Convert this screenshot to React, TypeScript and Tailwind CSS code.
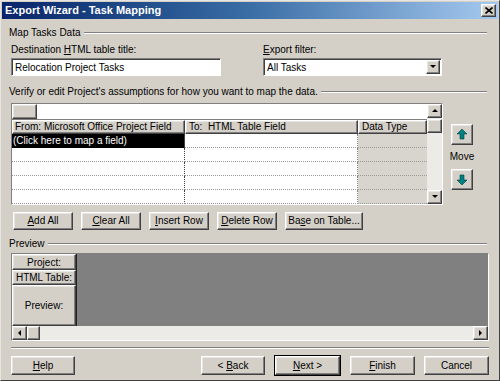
import React from 'react';

const raised =
  'border border-t-white border-l-white border-r-[#404040] border-b-[#404040] shadow-[inset_-1px_-1px_#808080,inset_1px_1px_#e8e6e2]';
const sunken =
  'border border-t-[#808080] border-l-[#808080] border-r-white border-b-white shadow-[inset_1px_1px_#404040]';

const U = ({ children }: { children: React.ReactNode }) => <span className="underline underline-offset-1">{children}</span>;

const GroupLabel = ({ children }: { children: React.ReactNode }) => (
  <div className="flex items-center gap-[3px] pl-[8px] pr-[12px] h-[14px]">
    <span className="leading-none whitespace-nowrap">{children}</span>
    <div className="flex-1 border-t border-t-[#808080] border-b border-b-white" />
  </div>
);

const Btn = ({ children, className = '', focus = false }: { children: React.ReactNode; className?: string; focus?: boolean }) => (
  <div className={`${focus ? 'outline outline-1 outline-black' : ''} ${className}`}>
    <div className={`${raised} bg-[#d4d0c8] h-full flex items-center justify-center leading-none whitespace-nowrap`}>
      <span className="whitespace-pre">{children}</span>
    </div>
  </div>
);

const Arrow = ({ dir, color = '#000' }: { dir: 'up' | 'down' | 'left' | 'right'; color?: string }) => {
  const pts = { up: '1,5 4,2 7,5', down: '1,2 4,5 7,2', left: '5,1 2,4 5,7', right: '2,1 5,4 2,7' }[dir];
  return (
    <svg width="8" height="8" viewBox="0 0 8 8">
      <polygon points={pts} fill={color} />
    </svg>
  );
};

const MoveArrow = ({ up }: { up: boolean }) => (
  <svg width="10" height="11" viewBox="0 0 10 11" style={{ transform: up ? undefined : 'rotate(180deg)' }}>
    <polygon points="5,0 10,5 7,5 7,10 3,10 3,5 0,5" fill="#008080" stroke="#004040" strokeWidth="0.6" />
  </svg>
);

const ScrollBtn = ({ dir, className = '' }: { dir: 'up' | 'down' | 'left' | 'right'; className?: string }) => (
  <div className={`${raised} bg-[#d4d0c8] flex items-center justify-center ${className}`}>
    <Arrow dir={dir} />
  </div>
);

const dotted = 'border-b border-dotted border-b-[#9a9a9a]';

export default function App() {
  const rows = [0, 1, 2, 3, 4];
  return (
    <div
      className="w-[500px] h-[381px] bg-[#d4d0c8] text-black text-[10px] overflow-hidden border border-t-[#e8e6e2] border-l-[#e8e6e2] border-r-[#404040] border-b-[#404040]"
      style={{ fontFamily: '"Liberation Sans", Arial, sans-serif' }}
    >
      {/* title bar */}
      <div className="mx-[1px] mt-[1px] h-[17px] flex items-center justify-between pl-[3px] pr-[2px] bg-gradient-to-r from-[#0a246a] via-[#3a6ea5] to-[#a6caf0]">
        <span className="text-white font-bold text-[11px] leading-none">Export Wizard - Task Mapping</span>
        <div className={`${raised} bg-[#d4d0c8] w-[15px] h-[13px] flex items-center justify-center`}>
          <svg width="8" height="7" viewBox="0 0 8 7">
            <path d="M0.5 0.5 L7.5 6.5 M7.5 0.5 L0.5 6.5" stroke="#000" strokeWidth="1.6" />
          </svg>
        </div>
      </div>

      <div className="mt-[7px]">
        <GroupLabel>Map Tasks Data</GroupLabel>
      </div>

      <div className="flex pl-[10px] mt-[3px]">
        <div className="w-[210px]">
          <div className="h-[14px] leading-[14px]">
            Destination <U>H</U>TML table title:
          </div>
          <div className={`${sunken} bg-white h-[18px] mt-[1px] flex items-center pl-[3px]`}>Relocation Project Tasks</div>
        </div>
        <div className="w-[179px] ml-[42px]">
          <div className="h-[14px] leading-[14px]">
            <U>E</U>xport filter:
          </div>
          <div className={`${sunken} bg-white h-[18px] mt-[1px] flex items-center pl-[3px] pr-[1px]`}>
            <span className="flex-1">All Tasks</span>
            <ScrollBtn dir="down" className="w-[14px] h-[14px]" />
          </div>
        </div>
      </div>

      <div className="mt-[9px]">
        <GroupLabel>Verify or edit Project's assumptions for how you want to map the data.</GroupLabel>
      </div>

      <div className="flex pl-[10px] mt-[4px]">
        {/* mapping grid */}
        <div className={`${sunken} bg-white w-[432px] h-[102px] flex`}>
          <div className="flex-1 flex flex-col">
            <div className="h-[16px] flex border-b border-b-[#808080]">
              <div className={`${raised} bg-[#d4d0c8] w-[25px] h-full`} />
              <div className="flex-1 bg-white" />
            </div>
            <div className="h-[14px] flex">
              <div className={`${raised} bg-[#d4d0c8] w-[173px] pl-[2px] leading-[12px] whitespace-nowrap`}>From: Microsoft Office Project Field</div>
              <div className={`${raised} bg-[#d4d0c8] w-[173px] pl-[3px] leading-[12px] whitespace-nowrap`}>To:&nbsp; HTML Table Field</div>
              <div className={`${raised} bg-[#d4d0c8] flex-1 pl-[3px] leading-[12px] whitespace-nowrap`}>Data Type</div>
            </div>
            {rows.map((r) => (
              <div key={r} className="h-[14px] flex">
                <div
                  className={`w-[173px] border-r border-r-[#404040] pl-[1px] leading-[13px] whitespace-nowrap ${
                    r === 0 ? 'bg-black text-white' : `bg-white ${dotted}`
                  }`}
                >
                  {r === 0 ? '(Click here to map a field)' : ''}
                </div>
                <div className={`w-[173px] bg-white border-r border-dotted border-r-[#808080] ${dotted}`} />
                <div className={`flex-1 bg-[#d8d5ce] ${dotted}`} />
              </div>
            ))}
          </div>
          <div className="w-[15px] flex flex-col bg-[#ecebe8]">
            <ScrollBtn dir="up" className="h-[14px]" />
            <div className={`${raised} bg-[#d4d0c8] h-[14px] mt-[1px]`} />
            <div className="flex-1" />
            <ScrollBtn dir="down" className="h-[14px]" />
          </div>
        </div>

        {/* move */}
        <div className="flex flex-col items-center ml-[8px] w-[22px] pt-[21px]">
          <Btn className="w-[22px] h-[21px]">
            <MoveArrow up />
          </Btn>
          <div className="h-[24px] leading-[24px]">Move</div>
          <Btn className="w-[22px] h-[21px]">
            <MoveArrow up={false} />
          </Btn>
        </div>
      </div>

      <div className="flex pl-[12px] mt-[7px] gap-[8px] h-[18px]">
        <Btn className="w-[60px]"><U>A</U>dd All</Btn>
        <Btn className="w-[60px]"><U>C</U>lear All</Btn>
        <Btn className="w-[60px]"><U>I</U>nsert Row</Btn>
        <Btn className="w-[60px]"><U>D</U>elete Row</Btn>
        <Btn className="w-[78px]">Ba<U>s</U>e on Table...</Btn>
      </div>

      <div className="mt-[7px]">
        <GroupLabel>Preview</GroupLabel>
      </div>

      {/* preview */}
      <div className={`${sunken} ml-[10px] mt-[2px] w-[478px] h-[88px] flex flex-col bg-[#ecebe8]`}>
        <div className="flex h-[72px] shrink-0">
          <div className="w-[64px] flex flex-col">
            <div className={`${raised} bg-[#d4d0c8] h-[16px] flex items-center justify-center`}>Project:</div>
            <div className={`${raised} bg-[#d4d0c8] h-[15px] flex items-center justify-center`}>HTML Table:</div>
            <div className={`${raised} bg-[#d4d0c8] flex-1 flex items-center justify-center`}>Preview:</div>
          </div>
          <div className="flex-1 bg-[#808080] border-l border-l-[#202020]" />
        </div>
        <div className="flex h-[14px] shrink-0">
          <ScrollBtn dir="left" className="w-[15px]" />
          <div className={`${raised} bg-[#d4d0c8] w-[13px]`} />
          <div className="flex-1" />
          <ScrollBtn dir="right" className="w-[15px]" />
        </div>
      </div>

      <div className="mx-[10px] mt-[6px] border-t border-t-[#808080] border-b border-b-white" />

      <div className="flex pl-[10px] mt-[7px] h-[19px]">
        <Btn className="w-[64px]"><U>H</U>elp</Btn>
        <Btn className="w-[64px] ml-[126px]">&lt; <U>B</U>ack</Btn>
        <Btn className="w-[65px] ml-[10px]" focus><U>N</U>ext &gt;</Btn>
        <Btn className="w-[65px] ml-[10px]"><U>F</U>inish</Btn>
        <Btn className="w-[65px] ml-[9px]">Cancel</Btn>
      </div>
    </div>
  );
}
